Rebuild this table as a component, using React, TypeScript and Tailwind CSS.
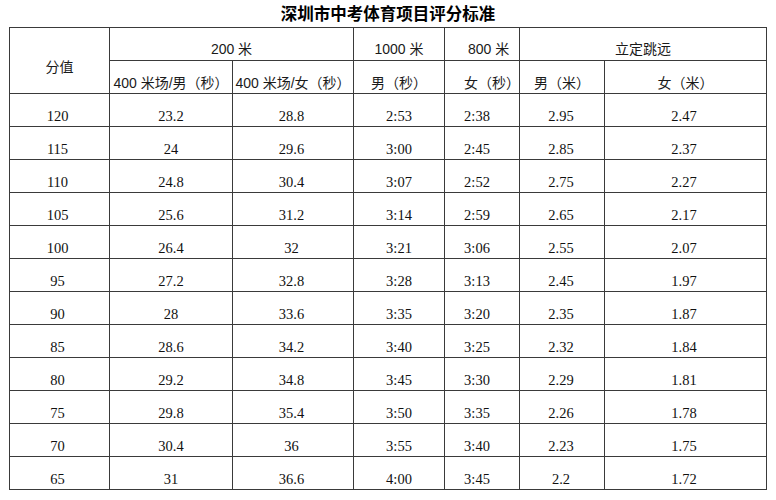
import React from "react";

const rows: string[][] = [
  ["120", "23.2", "28.8", "2:53", "2:38", "2.95", "2.47"],
  ["115", "24", "29.6", "3:00", "2:45", "2.85", "2.37"],
  ["110", "24.8", "30.4", "3:07", "2:52", "2.75", "2.27"],
  ["105", "25.6", "31.2", "3:14", "2:59", "2.65", "2.17"],
  ["100", "26.4", "32", "3:21", "3:06", "2.55", "2.07"],
  ["95", "27.2", "32.8", "3:28", "3:13", "2.45", "1.97"],
  ["90", "28", "33.6", "3:35", "3:20", "2.35", "1.87"],
  ["85", "28.6", "34.2", "3:40", "3:25", "2.32", "1.84"],
  ["80", "29.2", "34.8", "3:45", "3:30", "2.29", "1.81"],
  ["75", "29.8", "35.4", "3:50", "3:35", "2.26", "1.78"],
  ["70", "30.4", "36", "3:55", "3:40", "2.23", "1.75"],
  ["65", "31", "36.6", "4:00", "3:45", "2.2", "1.72"],
];

const dataAlign = [
  "justify-center pr-[4px]",
  "justify-center",
  "justify-center pr-[3px]",
  "justify-center",
  "justify-center pr-[10px]",
  "justify-center pr-[2px]",
  "justify-center pr-[3px]",
];

const cell = "flex items-end border-r border-b border-[#3a3a3a] whitespace-nowrap";
const head =
  "font-['Liberation_Sans','Noto_Sans_CJK_SC',sans-serif] text-[14px] leading-[14px] text-[#1a1a1a]";

export default function App() {
  return (
    <div className="w-[776px] h-[500px] bg-white overflow-hidden">
      <div className="ml-[9px] w-[758px]">
        <div className="h-[27px] flex justify-center pt-[5px]">
          <span className="font-['Noto_Sans_CJK_SC',sans-serif] font-bold text-[16.5px] leading-[16.5px] text-black">
            深圳市中考体育项目评分标准
          </span>
        </div>
        <div className="grid grid-cols-[100px_123px_121px_91px_75px_85px_162px] auto-rows-[33px] border-l border-t border-[#3a3a3a]">
          <div className={`${cell} ${head} row-span-2 justify-center pb-[19px]`}>分值</div>
          <div className={`${cell} ${head} col-span-2 justify-center pb-[4px]`}>200 米</div>
          <div className={`${cell} ${head} justify-center pb-[4px]`}>1000 米</div>
          <div className={`${cell} ${head} justify-start pl-[23px] pb-[4px]`}>800 米</div>
          <div className={`${cell} ${head} col-span-2 justify-center pb-[4px]`}>立定跳远</div>

          <div className={`${cell} ${head} justify-center pb-[3px]`}>400 米场/男（秒）</div>
          <div className={`${cell} ${head} justify-center pb-[3px]`}>400 米场/女（秒）</div>
          <div className={`${cell} ${head} justify-center pb-[3px]`}>男（秒）</div>
          <div className={`${cell} ${head} justify-start pl-[19px] pb-[3px]`}>女（秒）</div>
          <div className={`${cell} ${head} justify-center pb-[3px]`}>男（米）</div>
          <div className={`${cell} ${head} justify-center pb-[3px]`}>女（米）</div>

          {rows.map((r, i) =>
            r.map((v, j) => (
              <div
                key={`${i}-${j}`}
                className={`${cell} ${dataAlign[j]} pb-[3px] font-['Liberation_Serif',serif] text-[14.5px] leading-[14.5px] text-[#111111]`}
              >
                {v}
              </div>
            ))
          )}
        </div>
      </div>
    </div>
  );
}
